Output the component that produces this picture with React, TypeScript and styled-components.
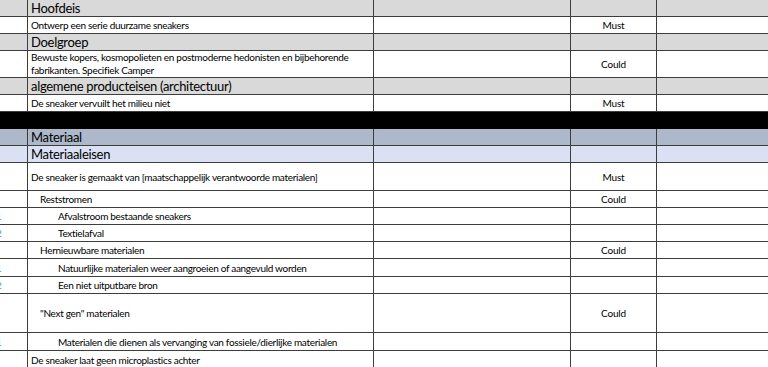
import styled, { createGlobalStyle } from "styled-components";

type Tone = "plain" | "gray" | "slate" | "pale";

type Row = {
  num?: string;
  text: string;
  sub?: string;
  level?: 0 | 1 | 2;
  heading?: boolean;
  priority?: string;
  tone?: Tone;
  height: number;
};

const tones: Record<Tone, string> = {
  plain: "#ffffff",
  gray: "#d9d9d9",
  slate: "#adb9ca",
  pale: "#d9e1f2",
};

const topRows: Row[] = [
  { text: "Hoofdeis", heading: true, tone: "gray", height: 16 },
  { text: "Ontwerp een serie duurzame sneakers", priority: "Must", height: 16 },
  { text: "Doelgroep", heading: true, tone: "gray", height: 16 },
  {
    text: "Bewuste kopers, kosmopolieten en postmoderne hedonisten en bijbehorende",
    sub: "fabrikanten. Specifiek Camper",
    priority: "Could",
    height: 26,
  },
  {
    text: "algemene producteisen (architectuur)",
    heading: true,
    tone: "gray",
    height: 16,
  },
  { text: "De sneaker vervuilt het milieu niet", priority: "Must", height: 16 },
];

const bottomRows: Row[] = [
  { text: "Materiaal", heading: true, tone: "slate", height: 16 },
  { text: "Materiaaleisen", heading: true, tone: "pale", height: 16 },
  {
    text: "De sneaker is gemaakt van [maatschappelijk verantwoorde materialen]",
    priority: "Must",
    height: 27,
  },
  { text: "Reststromen", level: 1, priority: "Could", height: 16 },
  { num: "1", text: "Afvalstroom bestaande sneakers", level: 2, height: 16 },
  { num: "2", text: "Textielafval", level: 2, height: 16 },
  { text: "Hernieuwbare materialen", level: 1, priority: "Could", height: 16 },
  {
    num: "1",
    text: "Natuurlijke materialen weer aangroeien of aangevuld worden",
    level: 2,
    height: 17,
  },
  { num: "2", text: "Een niet uitputbare bron", level: 2, height: 16 },
  { text: "\"Next gen\" materialen", level: 1, priority: "Could", height: 38 },
  {
    num: "1",
    text: "Materialen die dienen als vervanging van fossiele/dierlijke materialen",
    level: 2,
    height: 17,
  },
  { text: "De sneaker laat geen microplastics achter", height: 17 },
];

const indents = [3, 12, 30];

const Line = ({ row }: { row: Row }) => (
  <SheetRow $tone={row.tone ?? "plain"} $height={row.height}>
    <NumCell>{row.num && <Num>{row.num}</Num>}</NumCell>
    <TextCell $indent={indents[row.level ?? 0]} $heading={!!row.heading}>
      {row.sub ? (
        <Wrapped>
          <span>{row.text}</span>
          <span>{row.sub}</span>
        </Wrapped>
      ) : (
        row.text
      )}
    </TextCell>
    <Cell />
    <PriorityCell>{row.priority}</PriorityCell>
    <Cell $last />
  </SheetRow>
);

export default function App() {
  return (
    <>
      <GlobalStyle />
      <Sheet>
        {topRows.map((r, i) => (
          <Line key={`t${i}`} row={r} />
        ))}
        <Band />
        {bottomRows.map((r, i) => (
          <Line key={`b${i}`} row={r} />
        ))}
      </Sheet>
    </>
  );
}

const GlobalStyle = createGlobalStyle`
  html, body {
    margin: 0;
    padding: 0;
    background: #ffffff;
    overflow: hidden;
  }
  body {
    font-family: Lato, "Open Sans", "Liberation Sans", sans-serif;
    color: #000;
  }
`;

const Sheet = styled.div`
  width: 768px;
  height: 367px;
  overflow: hidden;
  display: flex;
  flex-direction: column;
`;

const SheetRow = styled.div<{ $tone: Tone; $height: number }>`
  display: grid;
  grid-template-columns: 28px 346px 197px 86px 1fr;
  flex: 0 0 ${(p) => p.$height + 1}px;
  background: ${(p) => tones[p.$tone]};
  border-bottom: 1px solid #3d3d3d;
  box-sizing: border-box;
`;

const Band = styled.div`
  flex: 0 0 17px;
  background: #000;
`;

const Cell = styled.div<{ $last?: boolean }>`
  box-sizing: border-box;
  border-right: ${(p) => (p.$last ? "none" : "1px solid #3d3d3d")};
  display: flex;
  align-items: center;
  overflow: hidden;
  white-space: nowrap;
`;

const NumCell = styled(Cell)`
  justify-content: flex-start;
`;

const Num = styled.span`
  font-size: 10px;
  color: #4a9be0;
  margin-left: -4px;
`;

const TextCell = styled(Cell)<{ $indent: number; $heading: boolean }>`
  padding-left: ${(p) => p.$indent}px;
  font-size: ${(p) => (p.$heading ? "13px" : "10px")};
  letter-spacing: -0.3px;
  line-height: 1;
  padding-top: ${(p) => (p.$heading ? "1px" : "0")};
  overflow: visible;
`;

const Wrapped = styled.div`
  display: flex;
  flex-direction: column;
  line-height: 13px;
`;

const PriorityCell = styled(Cell)`
  justify-content: center;
  font-size: 10px;
  letter-spacing: -0.2px;
`;
